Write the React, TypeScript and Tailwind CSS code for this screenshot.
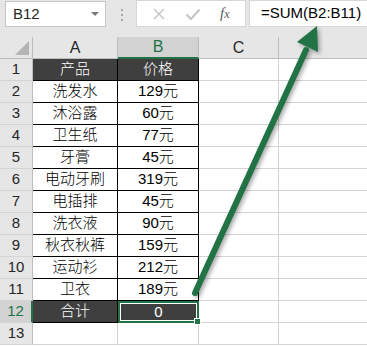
const rows: [string, string][] = [
  ['产品', '价格'],
  ['洗发水', '129元'],
  ['沐浴露', '60元'],
  ['卫生纸', '77元'],
  ['牙膏', '45元'],
  ['电动牙刷', '319元'],
  ['电插排', '45元'],
  ['洗衣液', '90元'],
  ['秋衣秋裤', '159元'],
  ['运动衫', '212元'],
  ['卫衣', '189元'],
  ['合计', '0'],
];

const font = { fontFamily: '"Liberation Sans", "Noto Sans CJK SC", sans-serif' };

function RowHead({ n, active }: { n: number; active?: boolean }) {
  return (
    <div
      className={
        'flex h-[22px] w-[33px] items-center justify-center border-b border-[#d4d4d4] text-[15px] ' +
        (active
          ? 'bg-[#d2d2d2] text-[#217346] border-r-2 border-r-[#217346]'
          : 'bg-[#e6e6e6] text-[#262626] border-r border-r-[#bdbdbd]')
      }
    >
      {n}
    </div>
  );
}

export default function App() {
  return (
    <div className="relative h-[346px] w-[367px] overflow-hidden bg-[#e6e6e6]" style={font}>
      {/* formula bar */}
      <div className="flex h-[28px] items-start">
        <div className="ml-[5px] mt-[1px] flex h-[26px] w-[101px] items-center justify-between border border-[#c6c6c6] bg-white pl-[7px] pr-[6px] text-[15px] text-[#262626]">
          <span>B12</span>
          <span className="h-0 w-0 border-x-[4px] border-t-[4px] border-x-transparent border-t-[#7a7a7a]" />
        </div>
        <div className="ml-[15px] mt-[9px] flex flex-col gap-[3px]">
          <span className="h-[2px] w-[2px] bg-[#a6a6a6]" />
          <span className="h-[2px] w-[2px] bg-[#a6a6a6]" />
          <span className="h-[2px] w-[2px] bg-[#a6a6a6]" />
        </div>
        <div className="ml-[13px] flex h-[27px] w-[110px] items-center border border-[#d6d6d6] bg-white">
          <svg width="14" height="14" viewBox="0 0 14 14" className="ml-[15px]">
            <path d="M2 2 L12 12 M12 2 L2 12" stroke="#c4c4c4" strokeWidth="1.4" />
          </svg>
          <svg width="16" height="14" viewBox="0 0 16 14" className="ml-[19px]">
            <path d="M1.5 7.5 L6 12 L14.5 2.5" stroke="#c4c4c4" strokeWidth="2" fill="none" />
          </svg>
          <span className="ml-[19px] text-[15px] italic text-[#5a5a5a]" style={{ fontFamily: '"Liberation Serif", serif' }}>
            f<span className="text-[12px]">x</span>
          </span>
        </div>
        <div className="ml-[3px] flex h-[27px] flex-1 items-center border border-[#d6d6d6] border-r-0 bg-white pl-[11px] text-[15px] text-black">
          =SUM(B2:B11)
        </div>
      </div>

      {/* grid */}
      <div className="mt-[9px] bg-white">
        <div className="flex h-[22px] bg-[#e6e6e6]">
          <div className="relative w-[33px] border-r border-b border-[#bdbdbd]">
            <svg className="absolute bottom-[3px] right-[3px]" width="14" height="14" viewBox="0 0 14 14">
              <polygon points="14,0 14,14 0,14" fill="#b4b4b4" />
            </svg>
          </div>
          <div className="flex w-[85px] items-center justify-center border-r border-b border-[#bdbdbd] text-[16px] text-[#262626]">A</div>
          <div className="flex w-[81px] items-center justify-center border-r border-[#bdbdbd] border-b-2 border-b-[#217346] bg-[#d2d2d2] text-[16px] text-[#217346]">B</div>
          <div className="flex w-[80px] items-center justify-center border-r border-b border-[#bdbdbd] text-[16px] text-[#262626]">C</div>
          <div className="flex-1 border-b border-[#bdbdbd]" />
        </div>

        {rows.map(([a, b], i) => {
          const dark = i === 0 || i === 11;
          const last = i === 11;
          const cell = dark ? 'bg-[#3f3f3f] text-white' : 'bg-white text-black';
          return (
            <div key={i} className="flex h-[22px] text-[15px]">
              <RowHead n={i + 1} active={last} />
              <div className={'flex w-[85px] items-center justify-center border-r border-b border-black font-light ' + cell}>{a}</div>
              {last ? (
                <div className="relative flex w-[81px] items-center justify-center border-2 border-[#217346] bg-[#3f3f3f] text-white shadow-[inset_0_0_0_1px_#ffffff]">
                  {b}
                  <span className="absolute -bottom-[4px] -right-[4px] box-content h-[5px] w-[5px] border border-white bg-[#217346]" />
                </div>
              ) : (
                <div className={'flex w-[81px] items-center justify-center border-r border-b border-black font-light ' + cell}>{b}</div>
              )}
              <div className="w-[80px] border-r border-b border-[#d4d4d4]" />
              <div className="flex-1 border-b border-[#d4d4d4]" />
            </div>
          );
        })}
        <div className="flex h-[22px]">
          <RowHead n={13} />
          <div className="w-[85px] border-r border-b border-[#d4d4d4]" />
          <div className="w-[81px] border-r border-b border-[#d4d4d4]" />
          <div className="w-[80px] border-r border-b border-[#d4d4d4]" />
          <div className="flex-1 border-b border-[#d4d4d4]" />
        </div>
        <div className="h-[10px]" />
      </div>

      {/* arrow */}
      <svg
        className="pointer-events-none absolute left-0 top-0"
        width="367"
        height="346"
        viewBox="0 0 367 346"
        style={{ filter: 'drop-shadow(2px 2px 2px rgba(0,0,0,0.35))' }}
      >
        <line x1="195" y1="293" x2="306" y2="50" stroke="#217346" strokeWidth="6" strokeLinecap="round" />
        <polygon points="317,26 297,42 318,52" fill="#217346" />
      </svg>
    </div>
  );
}
